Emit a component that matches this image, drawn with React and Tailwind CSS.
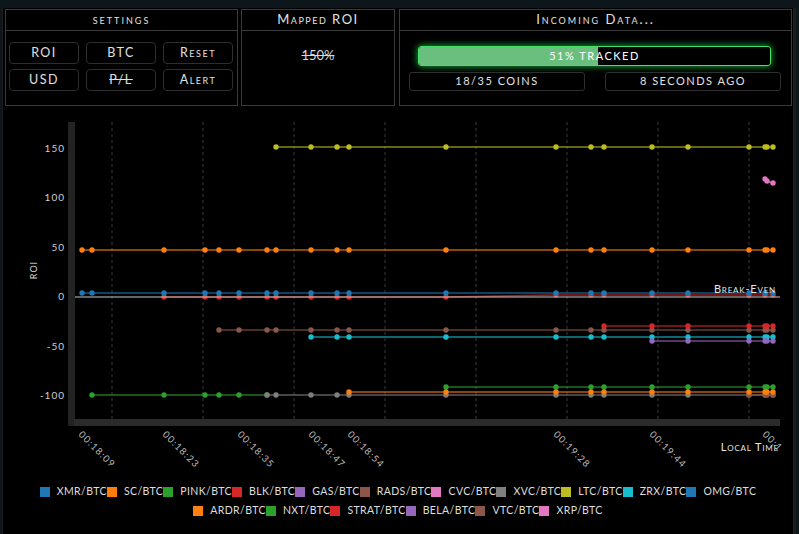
import React from "react";

const ALL = [82, 92, 164, 205, 219, 239, 267, 276, 311, 337, 349, 446, 556, 591, 604, 652, 688, 749, 765, 767, 773];
const from = (x, skip = []) => ALL.filter((v) => v >= x && !skip.includes(v));
const at = (xs, y) => xs.map((x) => [x, y]);

const BLUE = "#1f77b4";
const ORANGE = "#ff7f0e";
const GREEN = "#2ca02c";
const RED = "#d62728";
const PURPLE = "#9467bd";
const BROWN = "#8c564b";
const PINK = "#e377c2";
const GRAY = "#7f7f7f";
const OLIVE = "#bcbd22";
const CYAN = "#17becf";

const SERIES = [
  { color: RED, pts: [...at(from(164, [767]).filter((x) => x <= 446), 297), ...at(from(556, [767]), 295)] },
  { color: "zero" },
  { color: BLUE, pts: at(from(82, [767]), 293) },
  { color: OLIVE, pts: at(from(276), 147) },
  { color: ORANGE, pts: at(from(82), 250) },
  { color: PINK, pts: [[765, 179], [767, 181], [773, 183]] },
  { color: BROWN, pts: at(from(219), 330) },
  { color: RED, pts: at(from(604), 326) },
  { color: CYAN, pts: at(from(311), 337) },
  { color: PURPLE, pts: at(from(652), 341) },
  { color: GREEN, pts: at(from(92).filter((x) => x <= 267), 395) },
  { color: GRAY, pts: at(from(267, [767]), 395) },
  { color: BROWN, pts: at(from(749), 395) },
  { color: GREEN, pts: at(from(446), 387) },
  { color: ORANGE, pts: at(from(349), 392) },
];

const GRID = [112, 203, 294, 385, 476, 567, 658, 749];
const YTICKS = [["150", 152], ["100", 201], ["50", 251], ["0", 300], ["-50", 350], ["-100", 399]];
const XTICKS = [["00:18:09", 78], ["00:18:23", 162], ["00:18:35", 237], ["00:18:47", 308], ["00:18:54", 347], ["00:19:28", 553], ["00:19:44", 649], ["00:1", 762]];

const LEGEND_1 = [["XMR", BLUE], ["SC", ORANGE], ["PINK", GREEN], ["BLK", RED], ["GAS", PURPLE], ["RADS", BROWN], ["CVC", PINK], ["XVC", GRAY], ["LTC", OLIVE], ["ZRX", CYAN], ["OMG", BLUE]];
const LEGEND_2 = [["ARDR", ORANGE], ["NXT", GREEN], ["STRAT", RED], ["BELA", PURPLE], ["VTC", BROWN], ["XRP", PINK]];

function Panel({ title, width, titleClass, children }) {
  return (
    <div className={`${width} h-[97px] border border-[#3a3a3a] flex flex-col`}>
      <div className={`h-[21px] border-b border-[#3a3a3a] flex items-center justify-center text-[#e2e2e2] [font-variant:small-caps] ${titleClass}`}>
        {title}
      </div>
      {children}
    </div>
  );
}

function Btn({ label, strike }) {
  return (
    <div className={`h-[22px] rounded-[4px] border border-[#2e2e2e] flex items-center justify-center text-[12.5px] tracking-[1.5px] text-[#e0e0e0] [font-variant:small-caps] ${strike ? "line-through" : ""}`}>
      {label}
    </div>
  );
}

function Chart() {
  return (
    <svg width="790" height="364" viewBox="3 106 790 364" className="block font-['Lato',sans-serif]">
      {GRID.map((x) => (
        <line key={x} x1={x} x2={x} y1="122" y2="419" stroke="#3a3a3a" strokeWidth="1" strokeDasharray="3 3" />
      ))}
      <rect x="68" y="122" width="7" height="304" fill="#232323" />
      <rect x="74" y="419" width="706" height="7" fill="#2b2b2b" />
      {YTICKS.map(([t, y]) => (
        <text key={t} x="65" y={y} textAnchor="end" fontSize="10" letterSpacing="1" fill="#cfcfcf">{t}</text>
      ))}
      <text x="0" y="0" transform="translate(37 270) rotate(-90)" textAnchor="middle" fontSize="9" letterSpacing="1" fill="#cfcfcf">ROI</text>
      {SERIES.map((s, i) =>
        s.color === "zero" ? (
          <line key={i} x1="75" x2="780" y1="297" y2="297" stroke="#c8c8c8" strokeWidth="1" />
        ) : (
          <g key={i}>
            <polyline points={s.pts.map((p) => p.join(",")).join(" ")} fill="none" stroke={s.color} strokeOpacity="0.72" strokeWidth="1.6" />
            {s.pts.map(([x, y], j) => (
              <circle key={j} cx={x} cy={y} r="2.7" fill={s.color} />
            ))}
          </g>
        )
      )}
      <text x="776" y="293" textAnchor="end" fontSize="11" letterSpacing="0.8" fill="#e6e6e6" className="[font-variant:small-caps]">Break-Even</text>
      {XTICKS.map(([t, x]) => (
        <text key={t} x="0" y="0" transform={`translate(${x} 435) rotate(45)`} fontSize="9.5" letterSpacing="1.2" fill="#bdbdbd">{t}</text>
      ))}
      <text x="779" y="451" textAnchor="end" fontSize="11" letterSpacing="0.8" fill="#e6e6e6" className="[font-variant:small-caps]">Local Time</text>
    </svg>
  );
}

function LegendRow({ items }) {
  return (
    <div className="h-[19px] flex items-center justify-center">
      {items.map(([name, color]) => (
        <div key={name} className="flex items-center">
          <span className="w-[10px] h-[10px]" style={{ backgroundColor: color }} />
          <span className="ml-[7px] text-[10.5px] tracking-[0.4px] text-[#dedede]">{name}/BTC</span>
        </div>
      ))}
    </div>
  );
}

export default function App() {
  return (
    <div className="w-[799px] h-[534px] bg-[#0d171b] overflow-hidden font-['Lato',sans-serif]">
      <div className="mt-[8px] ml-[2px] w-[794px] h-[526px] bg-black border-l border-r-[3px] border-[#1d1d1d]">
        <div className="flex pt-[1px] pl-[2px]">
          <Panel title="settings" width="w-[233px]" titleClass="text-[13px] tracking-[2px]">
            <div className="grid grid-cols-[70px_70px_70px] gap-x-[7px] gap-y-[5px] pt-[11px] pl-[3px]">
              <Btn label="ROI" />
              <Btn label="BTC" />
              <Btn label="Reset" />
              <Btn label="USD" />
              <Btn label="P/L" strike />
              <Btn label="Alert" />
            </div>
          </Panel>
          <div className="w-[3px]" />
          <Panel title="Mapped ROI" width="w-[154px]" titleClass="text-[13px] tracking-[1.5px]">
            <div className="pt-[16px] text-center text-[13px] leading-[16px] text-[#d8d8d8] line-through">150%</div>
          </Panel>
          <div className="w-[4px]" />
          <Panel title="Incoming Data..." width="w-[393px]" titleClass="text-[13px] tracking-[2px]">
            <div className="pt-[15px] pl-[18px]">
              <div className="relative w-[353px] h-[20px] rounded-[3px] border border-[#45e068] shadow-[0_0_7px_#1fbf45] overflow-hidden">
                <div className="w-[51%] h-full bg-[#6abf7e]" />
                <div className="absolute inset-0 flex items-center justify-center text-[11px] tracking-[1.5px] text-white uppercase">
                  51% tracked
                </div>
              </div>
            </div>
            <div className="flex gap-[20px] pt-[6px] pl-[9px]">
              <div className="w-[176px] h-[19px] rounded-[3px] border border-[#2e2e2e] flex items-center justify-center text-[11px] tracking-[1.5px] text-[#e0e0e0] uppercase">
                18/35 coins
              </div>
              <div className="w-[176px] h-[19px] rounded-[3px] border border-[#2e2e2e] flex items-center justify-center text-[11px] tracking-[1.5px] text-[#e0e0e0] uppercase">
                8 seconds ago
              </div>
            </div>
          </Panel>
        </div>
        <Chart />
        <div className="mt-[12px] flex flex-col">
          <LegendRow items={LEGEND_1} />
          <LegendRow items={LEGEND_2} />
        </div>
      </div>
    </div>
  );
}
